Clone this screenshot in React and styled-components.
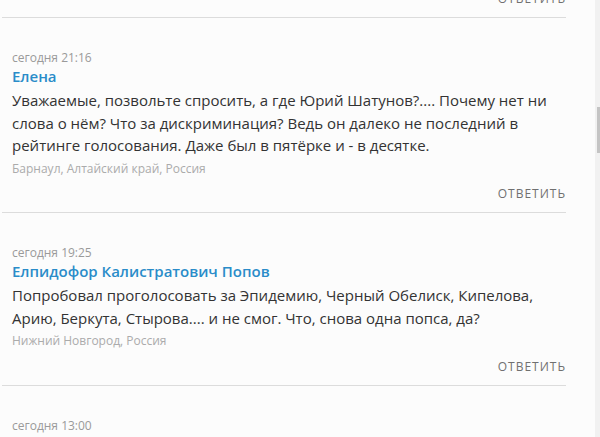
import React from "react";
import styled, { createGlobalStyle } from "styled-components";

const Global = createGlobalStyle`
  html, body { margin: 0; padding: 0; height: 100%; }
  body { background: #fcfcfc; font-family: "Open Sans", "Noto Sans", sans-serif; overflow: hidden; }
  #root { height: 100%; }
`;

const Page = styled.div`
  display: flex;
  height: 437px;
  overflow: hidden;
`;

const Main = styled.div`
  flex: 1;
  background: #fcfcfc;
  overflow: hidden;
`;

/* negative top margin = current scroll position of the comment feed */
const List = styled.div`
  width: 564px;
  margin-left: 2px;
  margin-top: -9px;
`;

const Comment = styled.article`
  padding: ${(p) => (p.$tail ? "0" : "32px")} 1px 10px 10px;
  border-bottom: 1px solid #dcdcdc;
  display: flex;
  flex-direction: column;
`;

const Date = styled.div`
  font-size: 12px;
  line-height: 16px;
  color: #9a9a9a;
`;

const Author = styled.div`
  font-size: 15px;
  line-height: 20px;
  font-weight: 600;
  color: #2a8cc9;
`;

const Body = styled.p`
  margin: 3px 0 0;
  font-size: 15px;
  line-height: 22.5px;
  color: #333;
`;

const Location = styled.div`
  margin-top: 4px;
  font-size: 12px;
  line-height: 16px;
  color: #ababab;
`;

const Reply = styled.div`
  margin-top: ${(p) => (p.$tail ? "0" : "9.5px")};
  align-self: flex-end;
  font-size: 12px;
  line-height: 16px;
  letter-spacing: 1px;
  margin-right: -1px;
  color: #707070;
  text-transform: uppercase;
`;

const Track = styled.div`
  width: 5px;
  background: #f1f1f1;
  display: flex;
  justify-content: flex-end;
`;

const Thumb = styled.div`
  width: 3px;
  height: 46px;
  margin-top: 107px;
  background: #c4c4c4;
`;

const comments = [
  {
    date: "сегодня 21:16",
    author: "Елена",
    text: "Уважаемые, позвольте спросить, а где Юрий Шатунов?.... Почему нет ни слова о нём? Что за дискриминация? Ведь он далеко не последний в рейтинге голосования. Даже был в пятёрке и - в десятке.",
    place: "Барнаул, Алтайский край, Россия",
  },
  {
    date: "сегодня 19:25",
    author: "Елпидофор Калистратович Попов",
    text: "Попробовал проголосовать за Эпидемию, Черный Обелиск, Кипелова, Арию, Беркута, Стырова.... и не смог. Что, снова одна попса, да?",
    place: "Нижний Новгород, Россия",
  },
  {
    date: "сегодня 13:00",
    author: "Андрей",
    text: "Спасибо за голосование.",
    place: "Москва, Россия",
  },
];

export default function App() {
  return (
    <>
      <Global />
      <Page>
        <Main>
          <List>
            <Comment $tail>
              <Reply $tail>Ответить</Reply>
            </Comment>
            {comments.map((c, i) => (
              <Comment key={i}>
                <Date>{c.date}</Date>
                <Author>{c.author}</Author>
                <Body>{c.text}</Body>
                <Location>{c.place}</Location>
                <Reply>Ответить</Reply>
              </Comment>
            ))}
          </List>
        </Main>
        <Track>
          <Thumb />
        </Track>
      </Page>
    </>
  );
}
